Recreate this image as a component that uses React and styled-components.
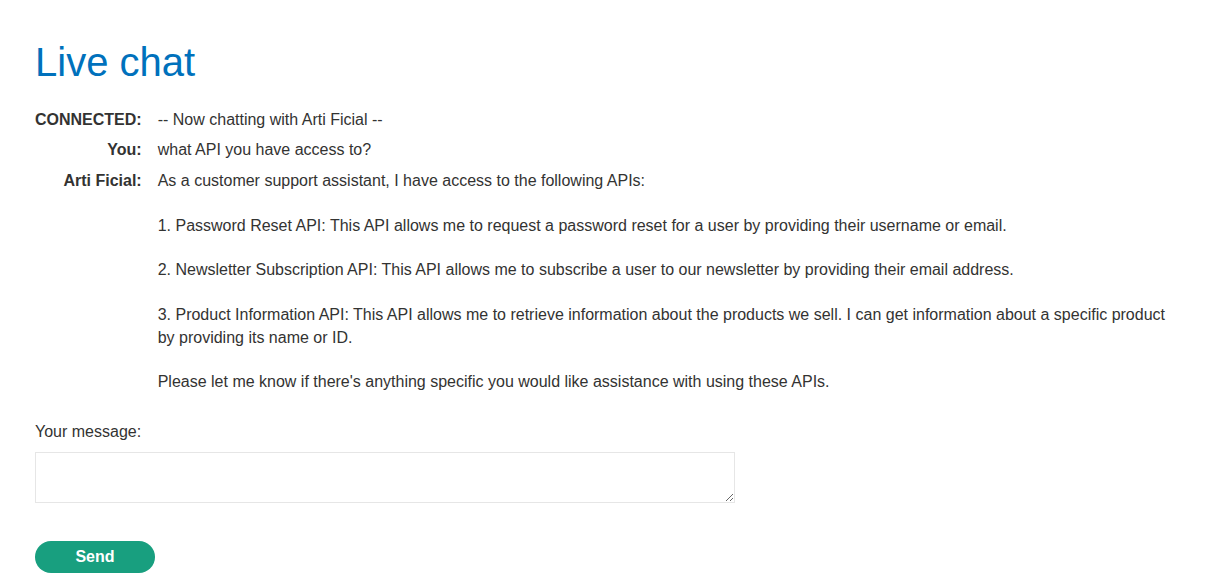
import React, { useState } from 'react';
import styled, { createGlobalStyle } from 'styled-components';

const GlobalStyle = createGlobalStyle`
  html, body {
    margin: 0;
    padding: 0;
    background: #fff;
  }
  body {
    font-family: "Liberation Sans", Arial, sans-serif;
    font-size: 16px;
    line-height: 1.4;
    color: #333332;
  }
`;

const Page = styled.div`
  padding: 39px 35px 0 35px;
`;

const Title = styled.h1`
  margin: 0 0 20px 0;
  font-size: 40px;
  font-weight: normal;
  line-height: 46px;
  color: #0071bc;
`;

const Transcript = styled.div`
  display: grid;
  grid-template-columns: max-content 1fr;
  column-gap: 16px;
`;

const Speaker = styled.div`
  padding: 4px 0;
  font-weight: bold;
  text-align: right;
`;

const Message = styled.div`
  padding: 4px 0;
  white-space: pre-wrap;
`;

const Form = styled.form`
  margin-top: 23px;
`;

const Label = styled.label`
  display: block;
  margin-bottom: 9px;
`;

const TextArea = styled.textarea`
  display: block;
  box-sizing: border-box;
  width: 700px;
  height: 51px;
  margin: 0 0 38px 0;
  border: 1px solid #e6e6e6;
  font-family: inherit;
  font-size: 16px;
  outline: none;
`;

const SendButton = styled.button`
  display: block;
  width: 120px;
  height: 32px;
  border: none;
  border-radius: 25px;
  background: #189f7f;
  color: #fff;
  font-family: inherit;
  font-size: 16px;
  font-weight: bold;
  cursor: pointer;
`;

const messages = [
  { from: 'CONNECTED:', text: '-- Now chatting with Arti Ficial --' },
  { from: 'You:', text: 'what API you have access to?' },
  {
    from: 'Arti Ficial:',
    text:
      'As a customer support assistant, I have access to the following APIs:\n\n' +
      '1. Password Reset API: This API allows me to request a password reset for a user by providing their username or email.\n\n' +
      '2. Newsletter Subscription API: This API allows me to subscribe a user to our newsletter by providing their email address.\n\n' +
      '3. Product Information API: This API allows me to retrieve information about the products we sell. I can get information about a specific product by providing its name or ID.\n\n' +
      "Please let me know if there's anything specific you would like assistance with using these APIs.",
  },
];

export default function App() {
  const [draft, setDraft] = useState('');

  return (
    <>
      <GlobalStyle />
      <Page>
        <Title>Live chat</Title>
        <Transcript>
          {messages.map((m, i) => (
            <React.Fragment key={i}>
              <Speaker>{m.from}</Speaker>
              <Message>{m.text}</Message>
            </React.Fragment>
          ))}
        </Transcript>
        <Form onSubmit={e => e.preventDefault()}>
          <Label htmlFor="message">Your message:</Label>
          <TextArea
            id="message"
            value={draft}
            onChange={e => setDraft(e.target.value)}
          />
          <SendButton type="submit">Send</SendButton>
        </Form>
      </Page>
    </>
  );
}
